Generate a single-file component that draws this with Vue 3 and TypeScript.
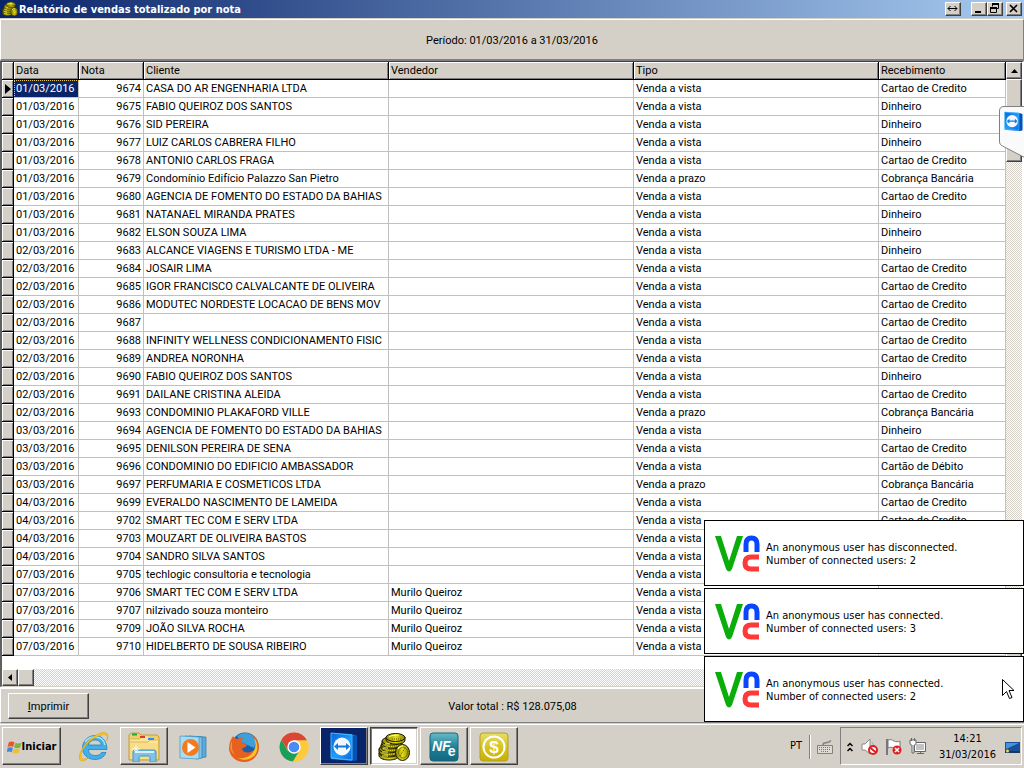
<script setup lang="ts">
import { ref } from 'vue'

interface Sale {
  date: string
  note: string
  client: string
  seller: string
  kind: string
  payment: string
}

const VISTA = 'Venda a vista'
const PRAZO = 'Venda a prazo'
const CARD = 'Cartao de Credito'
const DEBIT = 'Cartão de Débito'
const CASH = 'Dinheiro'
const BANK = 'Cobrança Bancária'
const MURILO = 'Murilo Queiroz'

function sale(day: string, note: string, client: string, payment: string, kind = VISTA, seller = ''): Sale {
  return { date: `${day}/03/2016`, note, client, seller, kind, payment }
}

const sales: Sale[] = [
  sale('01', '9674', 'CASA DO AR ENGENHARIA LTDA', CARD),
  sale('01', '9675', 'FABIO QUEIROZ DOS SANTOS', CASH),
  sale('01', '9676', 'SID PEREIRA', CASH),
  sale('01', '9677', 'LUIZ CARLOS CABRERA FILHO', CASH),
  sale('01', '9678', 'ANTONIO CARLOS FRAGA', CARD),
  sale('01', '9679', 'Condomínio Edifício Palazzo San Pietro', BANK, PRAZO),
  sale('01', '9680', 'AGENCIA DE FOMENTO DO ESTADO DA BAHIAS', CARD),
  sale('01', '9681', 'NATANAEL MIRANDA PRATES', CASH),
  sale('01', '9682', 'ELSON SOUZA LIMA', CASH),
  sale('02', '9683', 'ALCANCE VIAGENS E TURISMO LTDA - ME', CASH),
  sale('02', '9684', 'JOSAIR LIMA', CARD),
  sale('02', '9685', 'IGOR FRANCISCO CALVALCANTE DE OLIVEIRA', CARD),
  sale('02', '9686', 'MODUTEC NORDESTE LOCACAO DE BENS MOV', CARD),
  sale('02', '9687', '', CARD),
  sale('02', '9688', 'INFINITY WELLNESS CONDICIONAMENTO FISIC', CARD),
  sale('02', '9689', 'ANDREA NORONHA', CARD),
  sale('02', '9690', 'FABIO QUEIROZ DOS SANTOS', CASH),
  sale('02', '9691', 'DAILANE CRISTINA ALEIDA', CARD),
  sale('02', '9693', 'CONDOMINIO PLAKAFORD VILLE', BANK, PRAZO),
  sale('03', '9694', 'AGENCIA DE FOMENTO DO ESTADO DA BAHIAS', CASH),
  sale('03', '9695', 'DENILSON PEREIRA DE SENA', CARD),
  sale('03', '9696', 'CONDOMINIO DO EDIFICIO AMBASSADOR', DEBIT),
  sale('03', '9697', 'PERFUMARIA E COSMETICOS LTDA', BANK, PRAZO),
  sale('04', '9699', 'EVERALDO NASCIMENTO DE LAMEIDA', CARD),
  sale('04', '9702', 'SMART TEC COM E SERV LTDA', CARD),
  sale('04', '9703', 'MOUZART DE OLIVEIRA BASTOS', CARD),
  sale('04', '9704', 'SANDRO SILVA SANTOS', CARD),
  sale('07', '9705', 'techlogic consultoria e tecnologia', CARD),
  sale('07', '9706', 'SMART TEC COM E SERV LTDA', CARD, VISTA, MURILO),
  sale('07', '9707', 'nilzivado souza monteiro', CARD, VISTA, MURILO),
  sale('07', '9709', 'JOÃO SILVA ROCHA', CARD, VISTA, MURILO),
  sale('07', '9710', 'HIDELBERTO DE SOUSA RIBEIRO', CARD, VISTA, MURILO),
]

const selected = ref(0)

const notices = [
  { event: 'An anonymous user has disconnected.', users: 2 },
  { event: 'An anonymous user has connected.', users: 3 },
  { event: 'An anonymous user has connected.', users: 2 },
]
</script>

<template>
  <div class="desktop">
    <svg class="defs" width="0" height="0" aria-hidden="true">
      <defs>
        <linearGradient id="goldCoin" x1="0" x2="1">
          <stop offset="0" stop-color="#8c8400" />
          <stop offset=".5" stop-color="#e4dc18" />
          <stop offset="1" stop-color="#8c8400" />
        </linearGradient>
        <linearGradient id="tvBlue" x1="0" y1="0" x2="1" y2="1">
          <stop offset="0" stop-color="#0a62dc" />
          <stop offset=".5" stop-color="#1ea0ff" />
          <stop offset="1" stop-color="#0458d0" />
        </linearGradient>
        <symbol id="coins" viewBox="0 0 32 28">
          <g fill="url(#goldCoin)" stroke="#1c1a00" stroke-width="1">
            <path d="M1 20v3c1 3 6 4 10 4s9-1 10-4v-3z" />
            <ellipse cx="11" cy="20" rx="10" ry="4" />
            <path d="M1 16v3c1 3 6 4 10 4s9-1 10-4v-3z" />
            <ellipse cx="11" cy="16" rx="10" ry="4" />
            <path d="M3 12v3c1 3 6 4 10 4s9-1 10-4v-3z" />
            <ellipse cx="13" cy="12" rx="10" ry="4" />
            <path d="M4 8v3c1 3 6 4 10 4s9-1 10-4V8z" />
            <ellipse cx="14" cy="8" rx="10" ry="4" />
            <path d="M8 4v3c1 3 5 4 10 4s9-1 9-4V4z" />
            <ellipse cx="17.500" cy="4.500" rx="9.500" ry="4" />
            <ellipse cx="24.500" cy="19.500" rx="7" ry="8" />
          </g>
          <ellipse cx="25" cy="19.500" rx="4.500" ry="5.500" fill="none" stroke="#6c6600" stroke-width=".8" />
          <path d="M11 4c2-2 7-2 10-2M20 16c1-2 3-3 5-3M7 11h5M5 15h5M4 19h6M4 23h6" stroke="#ffff70" stroke-width="1.200" fill="none" />
          <path d="M22 23l5-8M14 6h9M12 13h8M11 17h5M10 21h5" stroke="#5c5600" stroke-width="1" stroke-dasharray="1 1" fill="none" />
        </symbol>
        <symbol id="teamviewer" viewBox="0 0 28 30">
          <path d="M1 1l20 1 6 2v24l-5 1L1 27z" fill="url(#tvBlue)" />
          <path d="M22 3l5 1v24l-5 1z" fill="#0750b4" />
          <path d="M1 1l21 2v25L1 26z" fill="none" stroke="#42bbff" stroke-width="1" />
          <ellipse cx="12" cy="14.500" rx="8.500" ry="9" fill="#f3f8fd" />
          <path d="M4 14.500l4-3.500v2.500h8V11l4 3.500-4 3.500v-2.500H8V18z" fill="#1379dc" />
        </symbol>
      </defs>
    </svg>

    <main class="window">
      <header class="titlebar">
        <svg class="app-icon" viewBox="0 0 32 28" aria-hidden="true"><use href="#coins" /></svg>
        <h1>Relatório de vendas totalizado por nota</h1>
        <button class="caption resize" aria-label="Redimensionar">
          <svg viewBox="0 0 13 11"><path d="M2 5.500h9M4.500 3L2 5.500 4.500 8M8.500 3L11 5.500 8.500 8" fill="none" stroke="#000" /></svg>
        </button>
        <button class="caption" aria-label="Minimizar">
          <svg viewBox="0 0 13 11"><path d="M3 8h6v2H3z" /></svg>
        </button>
        <button class="caption" aria-label="Restaurar">
          <svg viewBox="0 0 13 11">
            <path d="M4.500 3.500v-3h6v5h-2" fill="none" stroke="#000" /><path d="M4 0h7v2H4z" />
            <path d="M2.500 4.500h6v5h-6z" fill="none" stroke="#000" /><path d="M2 4h7v2H2z" />
          </svg>
        </button>
        <button class="caption close" aria-label="Fechar">
          <svg viewBox="0 0 13 11"><path d="M3 2l7 7M10 2L3 9" fill="none" stroke="#000" stroke-width="1.700" /></svg>
        </button>
      </header>

      <section class="period">Período: 01/03/2016 a 31/03/2016</section>

      <section class="grid">
        <div class="sheet">
          <table>
            <colgroup>
              <col class="c-mark" /><col class="c-short" /><col class="c-short" />
              <col /><col /><col /><col class="c-pay" />
            </colgroup>
            <thead>
              <tr>
                <th aria-label="Registro atual"></th>
                <th>Data</th>
                <th>Nota</th>
                <th>Cliente</th>
                <th>Vendedor</th>
                <th>Tipo</th>
                <th>Recebimento</th>
              </tr>
            </thead>
            <tbody>
              <tr v-for="(row, i) in sales" :key="row.note" @click="selected = i">
                <td class="mark">
                  <svg v-if="i === selected" viewBox="0 0 6 10" aria-hidden="true"><path d="M0 0l6 5-6 5z" /></svg>
                </td>
                <td :class="{ current: i === selected }">{{ row.date }}</td>
                <td class="num">{{ row.note }}</td>
                <td>{{ row.client }}</td>
                <td>{{ row.seller }}</td>
                <td>{{ row.kind }}</td>
                <td>{{ row.payment }}</td>
              </tr>
            </tbody>
          </table>
        </div>
        <div class="vscroll">
          <button class="raised arrow" aria-label="Rolar para cima">
            <svg viewBox="0 0 7 4"><path d="M0 4l3.500-4L7 4z" /></svg>
          </button>
          <div class="raised vthumb"></div>
          <button class="raised arrow last" aria-label="Rolar para baixo">
            <svg viewBox="0 0 7 4"><path d="M0 0l3.500 4L7 0z" /></svg>
          </button>
        </div>
        <div class="hscroll">
          <button class="raised arrow" aria-label="Rolar para a esquerda">
            <svg class="side" viewBox="0 0 4 7"><path d="M4 0L0 3.500 4 7z" /></svg>
          </button>
          <div class="raised hthumb"></div>
        </div>
      </section>

      <footer class="totals">
        <button class="raised print"><u>I</u>mprimir</button>
        <span>Valor total : R$ 128.075,08</span>
      </footer>
    </main>

    <nav class="taskbar">
      <button class="task raised start">
        <svg viewBox="0 0 16 14" aria-hidden="true">
          <path d="M2 2c2-1.500 4-1 6 0L6.500 7c-2-1-4-1-6 0z" fill="#e8552a" />
          <path d="M9 2.500c2 1 4 1 6.500 0L14 7.500c-2 1-4 1-6.500 0z" fill="#7cb63c" />
          <path d="M.5 8c2-1.200 4-1 5.800 0L5 12.500c-2-1-3-1-5 0z" fill="#3e8ad8" />
          <path d="M7.200 8.500c2 1 4 1 6.500 0L12.500 13c-2 1-4 1-6.500 0z" fill="#f5bd28" />
        </svg>
        Iniciar
      </button>

      <button class="task" aria-label="Internet Explorer">
        <svg class="icon" viewBox="0 0 30 30">
          <path d="M28 17.500H9.500c0 4 3 6 7 6 3 0 5-1 6-3H27c-2 5-6 7-11 7C9 27.500 3.500 23 3.500 16S9 3.500 16 3.500s12 5.500 12 14zM9.500 13h13c-.5-3-3-5-6.500-5S10 10 9.500 13z" fill="#3fb0ea" stroke="#1b79bd" stroke-width=".7" />
          <path d="M6 10c2-3 6-5 10-5 5 0 9 3 10 8" fill="none" stroke="#a4e4ff" stroke-width="1.400" />
          <path d="M27.500 9c2-6 0-8-8-5C11 7 2 17 2 24c0 4 4 3.500 8 1-2 3-8 6-9.500 2C-1 20 8 7 19 2c7-3 10-1 10 2 0 2-.5 3.500-1.500 5z" fill="#fbc61c" stroke="#d99a0e" stroke-width=".5" />
        </svg>
      </button>

      <button class="task raised" aria-label="Explorador de arquivos">
        <svg class="icon wide" viewBox="0 0 32 30">
          <path d="M1 3l2-2h8l2 2h16l2 2v23H1z" fill="#f0cf6c" stroke="#c99c33" />
          <path d="M2 7h11V4h7v3h10v20H2z" fill="#fbe69f" />
          <path d="M2 7h10M2 10h18l2-2h8" stroke="#d9b34c" fill="none" />
          <path d="M4 1.500h5v2H4z" fill="#19a83a" /><path d="M12 4h5v2h-5z" fill="#e03a26" /><path d="M20 6h6v2h-6z" fill="#2e8de8" />
          <path d="M2 11h28v16H2z" fill="#f8dc87" />
          <path d="M5 30V20c0-2 1-2 3-2h17c2 0 3 0 3 2v10h-6v-4c0-1-1-2-2-2h-7c-1 0-2 1-2 2v4z" fill="#7dc2e8" stroke="#4a94c6" />
          <path d="M7 20h19" stroke="#d4f0fc" stroke-width="2" />
          <path d="M8 13v8M4 17h8M6 15l4 4M10 15l-4 4" stroke="#fff" stroke-width=".8" />
        </svg>
      </button>

      <button class="task" aria-label="Reprodutor de mídia">
        <svg class="icon" viewBox="0 0 30 30">
          <path d="M10 4l17 1v20l-6 1z" fill="#5caad8" stroke="#2f7cb0" stroke-width=".7" />
          <path d="M6 4l17 1v21l-6 1z" fill="#7fc3e6" stroke="#2f7cb0" stroke-width=".7" />
          <path d="M1 4l19 1v22L1 26z" fill="#a9dbf2" stroke="#4495c4" stroke-width=".7" />
          <circle cx="11.500" cy="15.500" r="8.500" fill="#f47a20" />
          <path d="M8.500 10l8 5.500-8 5.500z" fill="#fff" />
        </svg>
      </button>

      <button class="task" aria-label="Firefox">
        <svg class="icon" viewBox="0 0 30 30">
          <circle cx="16" cy="14" r="13.500" fill="#1f5fa8" />
          <path d="M8 4c5-4 12-4 16 0 3 4 3 8 1 12L12 10z" fill="#3ba0dc" />
          <path d="M4 4c1 2 3 3 5 3 2-2 4-2 5-1-2 2-2 4 0 5l4 2c-1 3-4 2-5 4 1 4 7 5 12 1-1 3-4 5-8 5 6 0 11-6 10-12-1-4-3-7-6-9 6 2 9 8 9 13 0 9-7 15-15 15S0 24 0 16C0 11 2 7 4 4z" fill="#e6601f" />
          <path d="M25 6c4 4 5 13 0 18-4 4-11 5-16 2 6 1 12-1 15-6 3-4 3-9 1-14z" fill="#fbc02c" />
          <path d="M3 9c0 5-1 9 3 14-5-3-6-9-3-14z" fill="#f89b2c" />
        </svg>
      </button>

      <button class="task" aria-label="Chrome">
        <svg class="icon" viewBox="0 0 30 30">
          <circle cx="15" cy="15" r="14.500" fill="#fdca3c" />
          <path d="M2.500 7.700A14.500 14.500 0 0 1 28 8.500H15L8.500 18z" fill="#db4537" />
          <path d="M2.500 7.700A14.500 14.500 0 0 0 14 29.500l7-11.500-12.500.5z" fill="#1a9e5c" />
          <path d="M15 8.500h13A14.500 14.500 0 0 1 14 29.500L21 18z" fill="#fdca3c" />
          <circle cx="15" cy="15" r="6.700" fill="#fff" /><circle cx="15" cy="15" r="5.300" fill="#4a8af4" />
        </svg>
      </button>

      <button class="task raised navy" aria-label="TeamViewer">
        <svg class="icon" viewBox="0 0 28 30"><use href="#teamviewer" /></svg>
      </button>

      <button class="task pressed" aria-label="Relatório de vendas">
        <svg class="icon wide" viewBox="0 0 32 28"><use href="#coins" /></svg>
      </button>

      <button class="task raised" aria-label="Nota fiscal eletrônica">
        <svg class="icon" viewBox="0 0 30 30">
          <defs>
            <linearGradient id="teal" x2="0" y2="1"><stop offset="0" stop-color="#68bcc8" /><stop offset=".5" stop-color="#1f8098" /><stop offset="1" stop-color="#126880" /></linearGradient>
          </defs>
          <rect x="1" y="1" width="28" height="28" rx="3" fill="url(#teal)" stroke="#176479" />
          <text x="3" y="19" class="nf">NF<tspan dx="-3" dy="5" class="nfe">e</tspan></text>
        </svg>
      </button>

      <button class="task raised" aria-label="Financeiro">
        <svg class="icon" viewBox="0 0 30 30">
          <defs>
            <linearGradient id="mustard" x2="0" y2="1"><stop offset="0" stop-color="#e6dc6c" /><stop offset=".5" stop-color="#d8c420" /><stop offset="1" stop-color="#c8b000" /></linearGradient>
          </defs>
          <rect x="1" y="1" width="28" height="28" rx="3" fill="url(#mustard)" stroke="#b3a21e" />
          <circle cx="15" cy="15" r="10.500" fill="none" stroke="#fff" stroke-width="2" />
          <text x="15" y="21" text-anchor="middle" class="dollar">$</text>
        </svg>
      </button>

      <div class="lang">
        <span>PT</span>
        <svg viewBox="0 0 16 16" aria-hidden="true">
          <path d="M.5 6.500h15v8H.5z" fill="#dedbd4" stroke="#85827c" />
          <path d="M2 8.500h12M2 10.500h12M4 12.500h8" stroke="#7c7974" stroke-dasharray="1 1" />
          <path d="M6 6c0-3 2-2 4-2.500 2 0 3-1 4-2" stroke="#85827c" stroke-width="1.500" fill="none" />
        </svg>
      </div>

      <div class="tray">
        <svg class="chev" viewBox="0 0 6 10" aria-hidden="true"><path d="M.5 4L3 1.500 5.500 4M.5 9L3 6.500 5.500 9" fill="none" stroke="#000" stroke-width="1.500" /></svg>
        <svg viewBox="0 0 18 18" aria-hidden="true">
          <path d="M1 6h3l5-5v15l-5-4H1z" fill="#fff" stroke="#8c8984" />
          <path d="M11 4q3 3 1 7" fill="none" stroke="#aaa" />
          <circle cx="12" cy="12" r="4" fill="#fff" stroke="#d91f1f" stroke-width="2" /><path d="M9 9.500l6 5" stroke="#d91f1f" stroke-width="2" />
        </svg>
        <svg viewBox="0 0 18 18" aria-hidden="true">
          <path d="M2 1v16" stroke="#777" stroke-width="2" />
          <path d="M3 2c3-1 4 0 6 1s4 1 6 0v8c-3 1-4 0-6-1s-4-1-6 0z" fill="#fff" stroke="#777" />
          <circle cx="12" cy="12" r="4.500" fill="#dc2222" /><path d="M10 10l4 4M14 10l-4 4" stroke="#fff" stroke-width="1.500" />
        </svg>
        <svg viewBox="0 0 18 18" aria-hidden="true">
          <path d="M5.500 4.500h11v9h-11z" fill="#c3c3c3" stroke="#666" /><path d="M6.500 5.500h9v7h-9z" fill="none" stroke="#fff" />
          <path d="M8 15.500h7M11.500 14v2" stroke="#666" />
          <path d="M1 2h6v3c0 2-1 2-2 2v8H3V7C2 7 1 7 1 5zM2.500 0v3M5.500 0v3" fill="#fff" stroke="#666" />
        </svg>
        <time datetime="2016-03-31T14:21">14:21<br />31/03/2016</time>
        <svg class="screen" viewBox="0 0 16 13" aria-hidden="true">
          <path d="M0 1h15v9H0z" fill="#174f9a" /><path d="M1 2h13L1 8z" fill="#4794dc" /><path d="M0 10h15v2H0z" fill="#16365f" /><circle cx="2.500" cy="10" r="1.500" fill="#ffd53c" />
        </svg>
      </div>
    </nav>

    <svg class="tv-tab" viewBox="0 0 25 53" aria-hidden="true">
      <path d="M26 .5H5C2 .5.5 2 .5 5v30c0 3 1 4 3 5l23 12z" fill="#fafafa" stroke="#808080" />
      <svg x="5" y="5" width="19" height="21" viewBox="0 0 28 30"><use href="#teamviewer" /></svg>
    </svg>

    <aside class="notices">
      <article v-for="(n, i) in notices" :key="i">
        <svg viewBox="0 0 46 38" aria-hidden="true">
          <path d="M0 1h6l8 25 8-25h6L17 34q-3 5-6 0z" fill="#0aad0a" />
          <path d="M31 17V9q0-6 5.500-6T42 9v8" fill="none" stroke="#0a46ff" stroke-width="5" />
          <path d="M44 22h-8q-6 0-6 6t6 6h8" fill="none" stroke="#ff3838" stroke-width="5" />
        </svg>
        <p>{{ n.event }}<br />Number of connected users: {{ n.users }}</p>
      </article>
    </aside>

    <svg class="pointer" viewBox="0 0 12 21" aria-hidden="true">
      <path d="M.5.500v16l4-4 3 7 2.500-1-3-7h5z" fill="#fff" stroke="#000" />
    </svg>
  </div>
</template>

<style>
body {
  background: #d4d0c8;
}
</style>

<style scoped>
* {
  box-sizing: border-box;
}

.desktop {
  position: relative;
  display: flex;
  flex-direction: column;
  min-height: 100vh;
  background: #d4d0c8;
  color: #000;
  font: 11px/13px Roboto, "Liberation Sans", sans-serif;
  overflow: hidden;
}

.defs {
  position: absolute;
}

button {
  font: inherit;
  color: inherit;
  padding: 0;
  border: 0;
  background: none;
  border-radius: 0;
}

.raised,
.caption {
  background: #d4d0c8;
  border: 1px solid;
  border-color: #fff #404040 #404040 #fff;
  box-shadow: inset -1px -1px #808080;
}

.window {
  flex: 1;
  display: flex;
  flex-direction: column;
}

.titlebar {
  display: flex;
  align-items: center;
  height: 18px;
  padding: 0 2px;
  background: linear-gradient(90deg, #0a246a, #a6caf0);
  color: #fff;
}

.titlebar h1 {
  flex: 1;
  margin: 0;
  padding-top: 1px;
  font: bold 11px/16px "DejaVu Sans Condensed", "Noto Sans", sans-serif;
}

.app-icon {
  width: 16px;
  height: 16px;
  margin-right: 1px;
}

.caption {
  display: flex;
  width: 16px;
  height: 14px;
}

.caption svg {
  width: 13px;
  height: 11px;
}

.resize {
  margin-right: 10px;
}

.close {
  margin-left: 3px;
}

.period {
  display: flex;
  align-items: center;
  justify-content: center;
  height: 42px;
  margin-top: 1px;
  padding-top: 2px;
  border: solid;
  border-width: 1px 1px 2px;
  border-color: #fff #808080 #808080 #fff;
}

.grid {
  flex: 1;
  display: grid;
  grid-template-columns: 1fr 16px;
  grid-template-rows: 1fr 17px;
  border: solid;
  border-width: 1px 2px 1px;
  border-color: #404040 #fff #d4d0c8 #606060;
  background: #d4d0c8;
}

.sheet {
  background: #fff;
  min-width: 0;
}

table {
  width: 100%;
  table-layout: fixed;
  border-collapse: separate;
  border-spacing: 0;
}

.c-mark {
  width: 12px;
}

.c-short {
  width: 65px;
}

.c-pay {
  width: 127px;
}

th,
td {
  height: 18px;
  padding: 1px 0 0 2px;
  text-align: left;
  font-weight: normal;
  white-space: nowrap;
  overflow: hidden;
  line-height: 16px;
}

th {
  background: #d4d0c8;
  border-right: 1px solid #000;
  border-bottom: 1px solid #000;
  box-shadow: inset 1px 1px #fff, inset -1px -1px #808080;
}

td {
  border-right: 1px solid #c0c0c0;
  border-bottom: 1px solid #c0c0c0;
}

td.num {
  padding: 1px 2px 0 0;
  text-align: right;
}

td.mark {
  background: #d4d0c8;
  border-color: #000;
  box-shadow: inset 1px 1px #fff, inset -1px -1px #808080;
}

.mark svg {
  display: block;
  width: 6px;
  height: 10px;
  margin-left: 1px;
}

td.current {
  background: #0a246a;
  color: #fff;
  outline: 1px dotted #e8c85a;
  outline-offset: -1px;
}

.vscroll,
.hscroll {
  display: flex;
  background: repeating-conic-gradient(#fff 0 25%, #d4d0c8 0 50%) 0 0 / 2px 2px;
}

.vscroll {
  flex-direction: column;
}

.arrow {
  display: flex;
  align-items: center;
  justify-content: center;
  width: 16px;
  height: 17px;
}

.arrow svg {
  width: 7px;
  height: 4px;
}

.arrow svg.side {
  width: 4px;
  height: 7px;
}

.last {
  margin-top: auto;
}

.vthumb {
  height: 83px;
}

.hthumb {
  width: 16px;
}

.totals {
  display: grid;
  grid-template-columns: 1fr auto 1fr;
  align-items: center;
  height: 36px;
  padding: 1px 7px 0;
  border: solid;
  border-width: 2px 0 1px 1px;
  border-color: #fff #fff #808080;
}

.print {
  width: 81px;
  height: 26px;
}

.taskbar {
  display: flex;
  gap: 2px;
  height: 44px;
  padding: 2px;
  margin-top: 1px;
  border-top: 1px solid #fff;
  font-family: "DejaVu Sans Condensed", "Noto Sans", sans-serif;
}

.task {
  display: flex;
  align-items: center;
  justify-content: center;
  width: 48px;
  height: 38px;
  padding-top: 1px;
}

.start {
  width: 59px;
  margin-right: 7px;
  font-weight: bold;
}

.start svg {
  width: 15px;
  height: 14px;
}

.icon {
  width: 30px;
  height: 30px;
}

.icon.wide {
  width: 32px;
}

.navy {
  background: #0a246a;
}

.pressed {
  background: #fff;
  border: 1px solid;
  border-color: #404040 #fff #fff #404040;
  box-shadow: inset 1px 1px #808080, inset -1px -1px #d4d0c8;
}

.nf {
  font: italic bold 14px "Liberation Sans", sans-serif;
  fill: #fff;
}

.nfe {
  font: bold 14px "Liberation Sans", sans-serif;
}

.dollar {
  font: bold 17px "Liberation Sans", sans-serif;
  fill: #fff;
}

.lang {
  display: flex;
  align-items: center;
  gap: 7px;
  margin-left: auto;
  padding-right: 5px;
}

.lang span {
  height: 24px;
  padding-right: 7px;
  border-right: 1px solid #808080;
  box-shadow: 1px 0 #fff;
  line-height: 22px;
}

.lang svg {
  width: 16px;
  height: 16px;
}

.tray {
  display: flex;
  align-items: center;
  gap: 6px;
  width: 182px;
  height: 38px;
  padding: 2px 0 0 6px;
  border: 1px solid;
  border-color: #808080 #fff #fff #808080;
}

.tray svg {
  flex: none;
  width: 18px;
  height: 18px;
}

.tray svg.chev {
  width: 6px;
  height: 10px;
  margin-right: 2px;
}

.tray svg.screen {
  width: 16px;
  height: 13px;
}

.tray time {
  flex: 1;
  padding-left: 3px;
  text-align: center;
  line-height: 16px;
}

.tv-tab {
  position: absolute;
  top: 106px;
  right: 0;
  width: 25px;
  height: 53px;
}

.notices {
  position: absolute;
  right: 0;
  bottom: 46px;
  display: flex;
  flex-direction: column;
  gap: 2px;
  width: 320px;
}

.notices article {
  display: flex;
  align-items: center;
  gap: 5px;
  height: 66px;
  padding: 2px 0 0 10px;
  border: 1px solid #000;
  background: #fff;
  font-family: "DejaVu Sans Condensed", "Noto Sans", sans-serif;
}

.notices svg {
  width: 46px;
  height: 38px;
}

.notices p {
  margin: 0;
}

.pointer {
  position: absolute;
  right: 10px;
  bottom: 68px;
  width: 12px;
  height: 21px;
}
</style>
